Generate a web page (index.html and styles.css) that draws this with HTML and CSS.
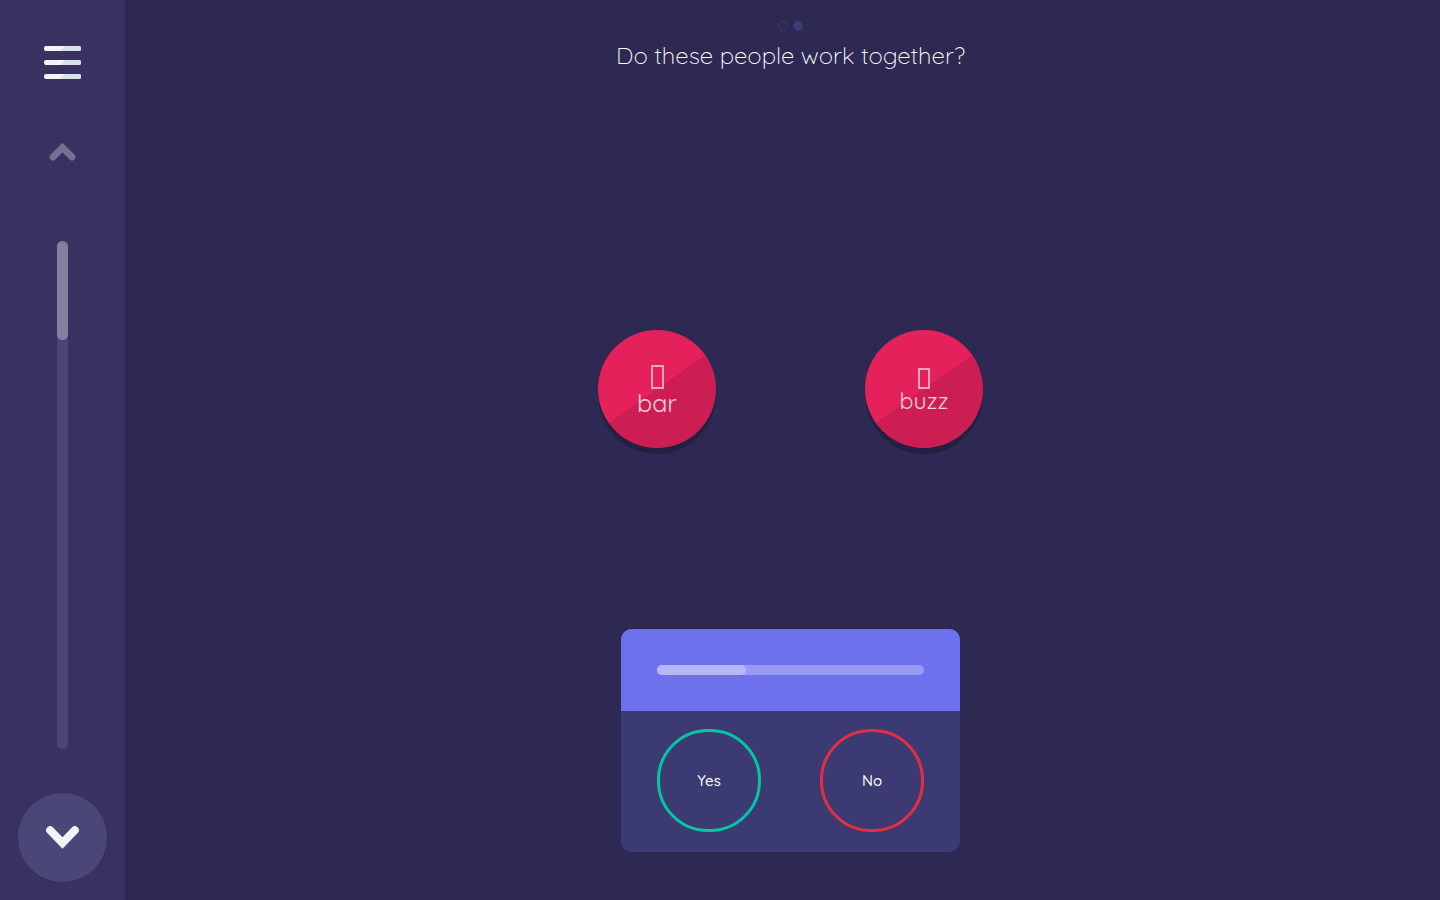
FILE: index.html
```html
<!DOCTYPE html>
<html lang="en">
<head>
<meta charset="utf-8">
<meta name="viewport" content="width=device-width, initial-scale=1">
<title>Do these people work together?</title>
<link rel="stylesheet" href="styles.css">
</head>
<body>
<div class="app">
  <nav class="sidebar" aria-label="Progress">
    <button class="icon-button menu" type="button" aria-label="Menu">
      <svg width="37" height="33" viewBox="0 0 37 33">
        <defs>
          <clipPath id="bars">
            <rect width="37" height="5" rx="2"/>
            <rect y="14" width="37" height="5" rx="2"/>
            <rect y="28" width="37" height="5" rx="2"/>
          </clipPath>
        </defs>
        <g clip-path="url(#bars)">
          <path fill="#f1f5f8" d="M0 0h37v33H0z"/>
          <path fill="#d8e3e6" d="M21 0h16v5H16zM21 14h16v5H16zM21 28h16v5H16z"/>
        </g>
      </svg>
    </button>
    <button class="icon-button up" type="button" aria-label="Previous" disabled>
      <svg width="27" height="18" viewBox="0 0 27 18">
        <path d="M4 14L13.5 4.6L23 14" fill="none" stroke="#77708f" stroke-width="6.8" stroke-linecap="round"/>
      </svg>
    </button>
    <div class="track"><div class="track-fill"></div></div>
    <button class="icon-button down" type="button" aria-label="Next">
      <svg width="33" height="23" viewBox="0 0 33 23">
        <path d="M4.2 4.2L16.5 17L28.8 4.2" fill="none" stroke="#f1f5f8" stroke-width="8" stroke-linecap="round"/>
      </svg>
    </button>
  </nav>
  <main class="stage">
    <header class="heading">
      <div class="steps"><span class="step"></span><span class="step step-current"></span></div>
      <h1 class="question">Do these people work together?</h1>
    </header>
    <div class="people">
      <div class="person person-bar"><span class="glyph"></span><span>bar</span></div>
      <div class="person person-buzz"><span class="glyph"></span><span>buzz</span></div>
    </div>
    <section class="card">
      <div class="card-top"><div class="meter"><div class="meter-fill"></div></div></div>
      <div class="answers">
        <button class="answer yes" type="button">Yes</button>
        <button class="answer no" type="button">No</button>
      </div>
    </section>
  </main>
</div>
</body>
</html>
```
FILE: styles.css
```css
* {
  box-sizing: border-box;
}

body {
  margin: 0;
  background: #2d2953;
  color: #ffffff;
  font-family: Quicksand, Lato, sans-serif;
}

button {
  font: inherit;
  color: inherit;
}

svg {
  display: block;
}

.app {
  display: flex;
  min-height: 100vh;
}

.sidebar {
  display: flex;
  flex-direction: column;
  align-items: center;
  flex: 0 0 125px;
  padding: 46px 0 18px;
  background: #393160;
}

.icon-button {
  padding: 0;
  border: 0;
  background: none;
}

.up {
  margin: 64px 0 80px;
}

.track {
  flex: 1;
  width: 11px;
  border-radius: 6px;
  background: #4b4678;
}

.track-fill {
  height: 99px;
  border-radius: 6px;
  background: #847e9f;
}

.down {
  display: grid;
  place-items: center;
  width: 89px;
  height: 89px;
  margin-top: 44px;
  border-radius: 50%;
  background: #4b4678;
}

.stage {
  display: flex;
  flex: 1;
  flex-direction: column;
  align-items: center;
  padding: 21px 0 48px 16px;
}

.heading {
  display: flex;
  flex-direction: column;
  align-items: center;
  gap: 8px;
}

.steps {
  display: flex;
  gap: 5px;
}

.step {
  width: 10px;
  height: 10px;
  border: 1px solid #3c3973;
  border-radius: 50%;
}

.step-current {
  background: #3d3a78;
}

.question {
  margin: 0;
  font-size: 24px;
  font-weight: 300;
  line-height: 32px;
}

.people {
  display: flex;
  flex: 1;
  align-items: center;
  gap: 149px;
  padding-top: 78px;
}

.person {
  display: flex;
  flex-direction: column;
  align-items: center;
  justify-content: center;
  width: 118px;
  height: 118px;
  padding-top: 3px;
  border-radius: 50%;
  background: linear-gradient(145deg, #e4215a 50%, #cd1e54 50%);
  box-shadow: 0 6px 0 #242044;
  color: #f8d0dc;
}

.person-bar {
  font-size: 25px;
  line-height: 27px;
}

.person-buzz {
  font-size: 23px;
  line-height: 24px;
}

.glyph {
  width: 13px;
  height: 24px;
  border: 2px solid #f3a3bb;
}

.person-buzz .glyph {
  width: 12px;
  height: 21px;
}

.card {
  width: 339px;
  overflow: hidden;
  border-radius: 11px;
  background: #3c3a73;
}

.card-top {
  padding: 36px;
  background: #6d71eb;
}

.meter {
  height: 10px;
  border-radius: 5px;
  background: #999bf0;
}

.meter-fill {
  width: 33.3%;
  height: 100%;
  border-radius: 5px;
  background: #b6b9f5;
}

.answers {
  display: flex;
  justify-content: space-between;
  padding: 18px 36px 20px;
}

.answer {
  width: 104px;
  height: 103px;
  padding: 0;
  border: 3px solid;
  border-radius: 51px;
  background: none;
  font-size: 15px;
  font-weight: 500;
}

.yes {
  border-color: #06c5a3;
}

.no {
  border-color: #e72d40;
}
```
